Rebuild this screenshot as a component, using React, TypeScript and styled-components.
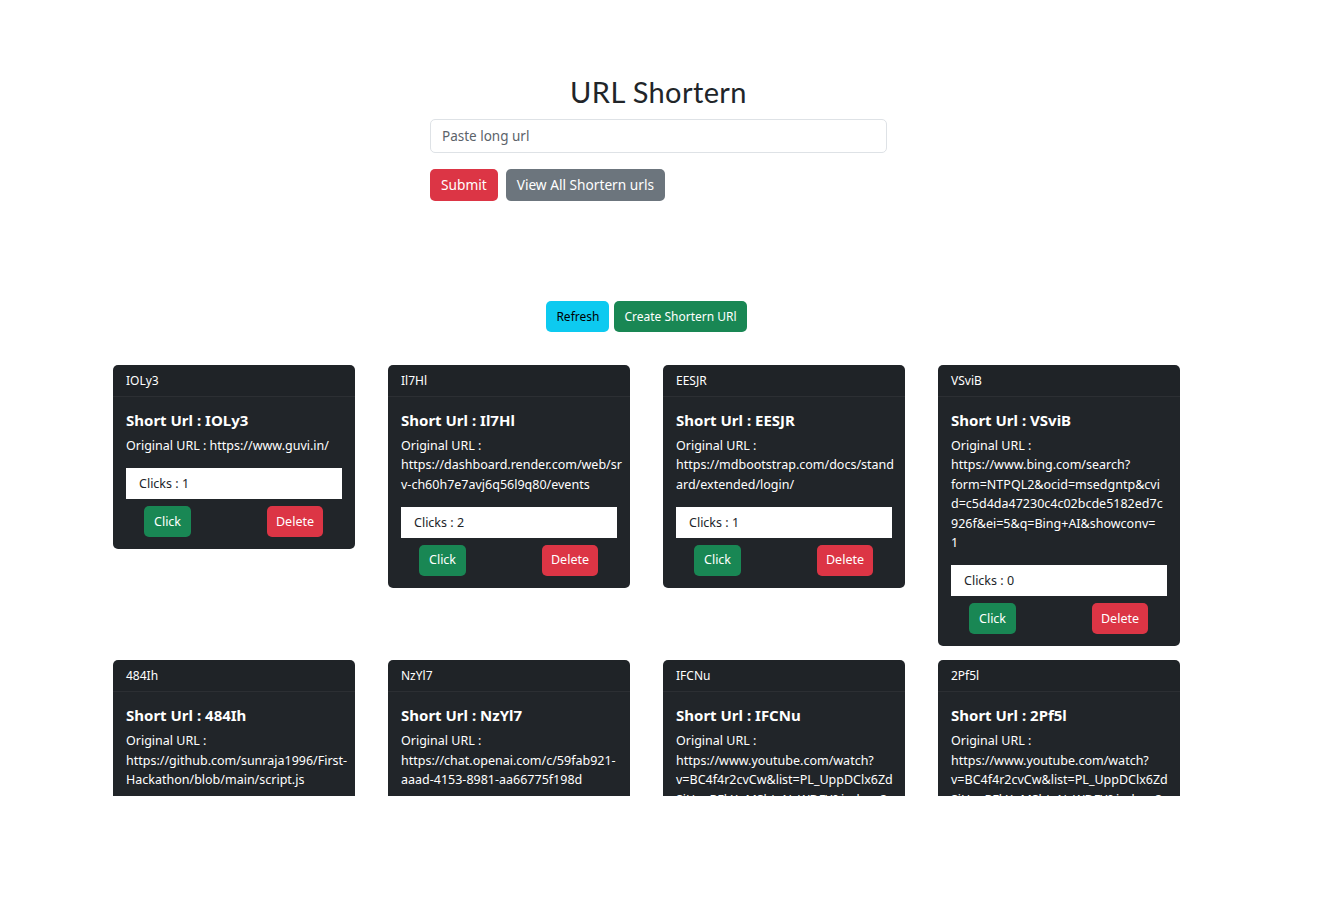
import React from 'react';
import styled, { createGlobalStyle } from 'styled-components';

const Global = createGlobalStyle`
  html, body { margin: 0; padding: 0; background: #fff; }
  body {
    font-family: "Noto Sans", "Open Sans", sans-serif;
    color: #212529;
    overflow: hidden;
  }
  * { box-sizing: border-box; }
`;

const Page = styled.div`
  height: 796px;
  overflow: hidden;
`;

const TopForm = styled.section`
  width: 457px;
  margin-left: 430px;
  padding-top: 74px;
  display: flex;
  flex-direction: column;
`;

const Title = styled.h1`
  margin: 0 0 10px;
  font-family: "Lato", "Noto Sans", sans-serif;
  font-weight: 400;
  font-size: 29px;
  line-height: 35px;
  letter-spacing: 0.4px;
  text-align: center;
  color: #212529;
`;

const UrlInput = styled.input`
  height: 34px;
  width: 100%;
  border: 1px solid #dee2e6;
  border-radius: 5px;
  padding: 0 11px;
  font-family: "Noto Sans", sans-serif;
  font-size: 13.5px;
  color: #212529;
  outline: none;
  &::placeholder { color: #5c636a; }
`;

const FormActions = styled.div`
  display: flex;
  gap: 8px;
  margin-top: 16px;
`;

const Button = styled.button<{ $bg: string; $fg?: string; $h?: number; $fs?: number; $px?: number }>`
  height: ${p => p.$h ?? 32}px;
  padding: 0 ${p => p.$px ?? 11}px;
  border: none;
  border-radius: 5px;
  background: ${p => p.$bg};
  color: ${p => p.$fg ?? '#fff'};
  font-family: "Noto Sans", sans-serif;
  font-size: ${p => p.$fs ?? 13.7}px;
  line-height: 1;
  cursor: pointer;
  white-space: nowrap;
`;

const Lower = styled.section`
  width: 1067px;
  margin-left: 113px;
  margin-top: 100px;
`;

const Toolbar = styled.div`
  display: flex;
  justify-content: center;
  gap: 5px;
  margin-bottom: 33px;
`;

const Grid = styled.div`
  display: grid;
  grid-template-columns: repeat(4, 242px);
  column-gap: 33px;
  row-gap: 14px;
  align-items: start;
`;

const Card = styled.article`
  background: #212529;
  border-radius: 5px;
  color: #fff;
  overflow: hidden;
`;

const CardHeader = styled.div`
  height: 32px;
  padding: 0 13px;
  display: flex;
  align-items: center;
  font-size: 12px;
  border-bottom: 1px solid rgba(255, 255, 255, 0.06);
  background: rgba(0, 0, 0, 0.03);
`;

const CardBody = styled.div`
  padding: 13px 13px 12px;
`;

const CardTitle = styled.h5`
  margin: 0 0 6px;
  font-size: 15px;
  font-weight: 700;
  line-height: 20px;
`;

const Original = styled.p`
  margin: 0 0 13px;
  font-size: 12.5px;
  line-height: 19.4px;
`;

const Line = styled.span`
  display: block;
  white-space: nowrap;
`;

const Clicks = styled.div`
  height: 31px;
  background: #fff;
  color: #212529;
  padding: 0 13px;
  display: flex;
  align-items: center;
  font-size: 12.5px;
`;

const CardActions = styled.div`
  display: flex;
  justify-content: space-between;
  margin-top: 7px;
  padding: 0 19px 0 18px;
`;

type Item = { code: string; lines: string[]; clicks: number };

const yt = ['Original URL :', 'https://www.youtube.com/watch?', 'v=BC4f4r2cvCw&list=PL_UppDClx6Zd', 'SjHnyRFkXgMSbJnNcWDFY&index=3'];

const items: Item[] = [
  { code: 'IOLy3', lines: ['Original URL : https://www.guvi.in/'], clicks: 1 },
  {
    code: 'Il7Hl',
    lines: ['Original URL :', 'https://dashboard.render.com/web/sr', 'v-ch60h7e7avj6q56l9q80/events'],
    clicks: 2,
  },
  {
    code: 'EESJR',
    lines: ['Original URL :', 'https://mdbootstrap.com/docs/stand', 'ard/extended/login/'],
    clicks: 1,
  },
  {
    code: 'VSviB',
    lines: [
      'Original URL :',
      'https://www.bing.com/search?',
      'form=NTPQL2&ocid=msedgntp&cvi',
      'd=c5d4da47230c4c02bcde5182ed7c',
      '926f&ei=5&q=Bing+AI&showconv=',
      '1',
    ],
    clicks: 0,
  },
  {
    code: '484Ih',
    lines: ['Original URL :', 'https://github.com/sunraja1996/First-', 'Hackathon/blob/main/script.js'],
    clicks: 0,
  },
  {
    code: 'NzYl7',
    lines: ['Original URL :', 'https://chat.openai.com/c/59fab921-', 'aaad-4153-8981-aa66775f198d'],
    clicks: 0,
  },
  { code: 'IFCNu', lines: yt, clicks: 0 },
  { code: '2Pf5l', lines: yt, clicks: 0 },
];

const UrlCard = ({ item }: { item: Item }) => (
  <Card>
    <CardHeader>{item.code}</CardHeader>
    <CardBody>
      <CardTitle>Short Url : {item.code}</CardTitle>
      <Original>
        {item.lines.map((l, i) => (
          <Line key={i}>{l}</Line>
        ))}
      </Original>
      <Clicks>Clicks : {item.clicks}</Clicks>
      <CardActions>
        <Button $bg="#198754" $h={31} $fs={12.5} $px={10}>Click</Button>
        <Button $bg="#dc3545" $h={31} $fs={12.5} $px={9}>Delete</Button>
      </CardActions>
    </CardBody>
  </Card>
);

export default function App() {
  return (
    <Page>
      <Global />
      <TopForm>
        <Title>URL Shortern</Title>
        <UrlInput placeholder="Paste long url" />
        <FormActions>
          <Button $bg="#dc3545">Submit</Button>
          <Button $bg="#6c757d">View All Shortern urls</Button>
        </FormActions>
      </TopForm>
      <Lower>
        <Toolbar>
          <Button $bg="#0dcaf0" $fg="#000" $h={31} $fs={12} $px={10}>Refresh</Button>
          <Button $bg="#198754" $h={31} $fs={12} $px={10}>Create Shortern URl</Button>
        </Toolbar>
        <Grid>
          {items.map(it => (
            <UrlCard key={it.code} item={it} />
          ))}
        </Grid>
      </Lower>
    </Page>
  );
}
